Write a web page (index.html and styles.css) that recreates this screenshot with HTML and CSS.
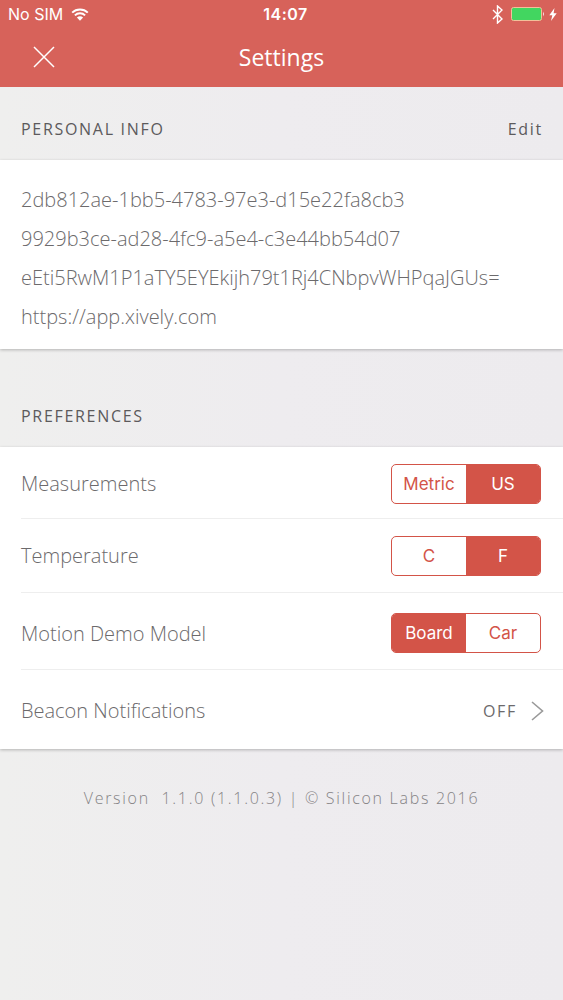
FILE: index.html
```html
<!DOCTYPE html>
<html lang="en">

<head>
    <meta charset="utf-8">
    <title>Settings</title>
    <link rel="stylesheet" href="styles.css">
</head>

<body>
    <header class="header">
        <div class="status-bar">
            <div class="status-left">
                <span>No SIM</span>
                <svg class="wifi" width="18" height="13" viewBox="0 0 18 13">
                    <path d="M1.2 4.6a11.2 11.2 0 0 1 15.6 0M3.9 7.4a7.3 7.3 0 0 1 10.2 0" fill="none" stroke="#fff" stroke-width="2"/>
                    <path d="M9 12.8L5.9 9.6a4.5 4.5 0 0 1 6.2 0z" fill="#fff"/>
                </svg>
            </div>
            <span class="clock">14:07</span>
            <div class="status-right">
                <svg class="bluetooth" width="11" height="19" viewBox="0 0 11 19">
                    <path d="M1 5l9 9-4.5 4V1L10 5l-9 9" fill="none" stroke="#fff" stroke-width="1.4"/>
                </svg>
                <svg class="battery" width="34" height="14" viewBox="0 0 34 14">
                    <rect x="0.5" y="0.5" width="30" height="13" rx="2" fill="#42d660" stroke="#f3c09a"/>
                    <path d="M32 4.5q1.8 2.5 0 5z" fill="#fff"/>
                </svg>
                <svg class="bolt" width="8" height="13" viewBox="0 0 8 13">
                    <path d="M5.5 0L0.3 7.2h3L2 13l5.7-7.7H4.6z" fill="#fff"/>
                </svg>
            </div>
        </div>
        <div class="nav-bar">
            <svg class="close" width="22" height="22" viewBox="0 0 22 22">
                <path d="M1 1l20 20M21 1L1 21" fill="none" stroke="#fff" stroke-width="1.5"/>
            </svg>
            <h1>Settings</h1>
        </div>
    </header>

    <div class="section-title personal">
        <h2>PERSONAL INFO</h2>
        <a class="edit">Edit</a>
    </div>
    <div class="card info">
        <p><span class="account">2db812ae-1bb5-4783-97e3-d15e22fa8cb3</span></p>
        <p><span class="device">9929b3ce-ad28-4fc9-a5e4-c3e44bb54d07</span></p>
        <p><span class="token">eEti5RwM1P1aTY5EYEkijh79t1Rj4CNbpvWHPqaJGUs=</span></p>
        <p><span class="url">https://app.xively.com</span></p>
    </div>

    <div class="section-title preferences">
        <h2>PREFERENCES</h2>
    </div>
    <div class="card">
        <div class="row measurements">
            <span class="label">Measurements</span>
            <div class="toggle">
                <span>Metric</span>
                <span class="active">US</span>
            </div>
        </div>
        <div class="row temperature">
            <span class="label">Temperature</span>
            <div class="toggle">
                <span>C</span>
                <span class="active">F</span>
            </div>
        </div>
        <div class="row motion">
            <span class="label">Motion Demo Model</span>
            <div class="toggle">
                <span class="active">Board</span>
                <span>Car</span>
            </div>
        </div>
        <div class="row beacon">
            <span class="label">Beacon Notifications</span>
            <div class="value">
                <span>OFF</span>
                <svg width="13" height="20" viewBox="0 0 13 20">
                    <path d="M1 1l10.5 9L1 19" fill="none" stroke="#999" stroke-width="1.6"/>
                </svg>
            </div>
        </div>
    </div>

    <footer class="version">Version&nbsp; 1.1.0 (1.1.0.3) | © Silicon Labs 2016</footer>
</body>
</html>
```
FILE: styles.css
```css
* {
    box-sizing: border-box;
}

body {
    margin: 0;
    min-height: 1000px;
    font-family: "Open Sans", sans-serif;
    color: #6c6a6c;
    background: linear-gradient(to right, #efefee, #eeecef 50%, #edebee);
}

h1, h2, p {
    margin: 0;
}

svg {
    display: block;
}

.header {
    height: 87px;
    background-color: #d7625a;
    color: #fff;
}

.status-bar {
    display: grid;
    grid-template-columns: 1fr auto 1fr;
    align-items: center;
    height: 28px;
    padding: 0 6px 0 8px;
    font-family: Inter, sans-serif;
    font-size: 16px;
}

.status-left, .status-right {
    display: flex;
    align-items: center;
}

.status-left {
    gap: 8px;
}

.status-right {
    justify-content: flex-end;
}

.clock {
    padding-left: 6px;
    font-weight: 600;
    letter-spacing: 0.5px;
}

.battery {
    margin-left: 8px;
}

.bolt {
    margin-left: 4px;
}

.nav-bar {
    display: grid;
    grid-template-columns: 1fr auto 1fr;
    align-items: center;
    height: 57px;
    padding: 0 33px;
}

.nav-bar h1 {
    font-size: 23px;
    font-weight: 400;
}

.section-title {
    display: flex;
    align-items: center;
    justify-content: space-between;
    height: 73px;
    padding: 11px 20px 0 21px;
    font-size: 16px;
    letter-spacing: 1.7px;
    color: #5c5a5c;
}

.section-title h2 {
    font-size: 16px;
    font-weight: 400;
}

.section-title.preferences {
    height: 98px;
    padding-top: 35px;
}

.card {
    background-color: #fff;
    box-shadow: 0 1px 3px rgba(0, 0, 0, 0.25);
}

.info {
    height: 189px;
    padding-top: 20px;
    font-size: 20px;
    font-weight: 300;
}

.info p {
    padding-left: 21px;
    line-height: 39px;
}

.row {
    display: flex;
    align-items: center;
    justify-content: space-between;
    height: 74px;
    margin-left: 21px;
    padding-right: 22px;
    border-bottom: 1px solid #eee;
}

.row.measurements {
    height: 72px;
    padding-top: 2px;
}

.row.motion {
    height: 77px;
    padding-top: 4px;
}

.row.beacon {
    height: 79px;
    padding: 2px 19px 0 0;
    border-bottom: none;
}

.label {
    font-size: 20px;
    font-weight: 300;
}

.toggle {
    display: flex;
    width: 150px;
    height: 40px;
    border: 1.5px solid #d35448;
    border-radius: 5px;
    overflow: hidden;
    font-family: Inter, sans-serif;
    font-size: 17px;
    color: #d35448;
}

.toggle span {
    display: flex;
    flex: 1;
    align-items: center;
    justify-content: center;
}

.toggle .active {
    background-color: #d35448;
    color: #fff;
}

.value {
    display: flex;
    align-items: center;
    gap: 14px;
    font-size: 16px;
    letter-spacing: 1.7px;
}

.version {
    padding-top: 38px;
    text-align: center;
    font-size: 16px;
    font-weight: 300;
    letter-spacing: 1.7px;
    color: #858385;
}
```
